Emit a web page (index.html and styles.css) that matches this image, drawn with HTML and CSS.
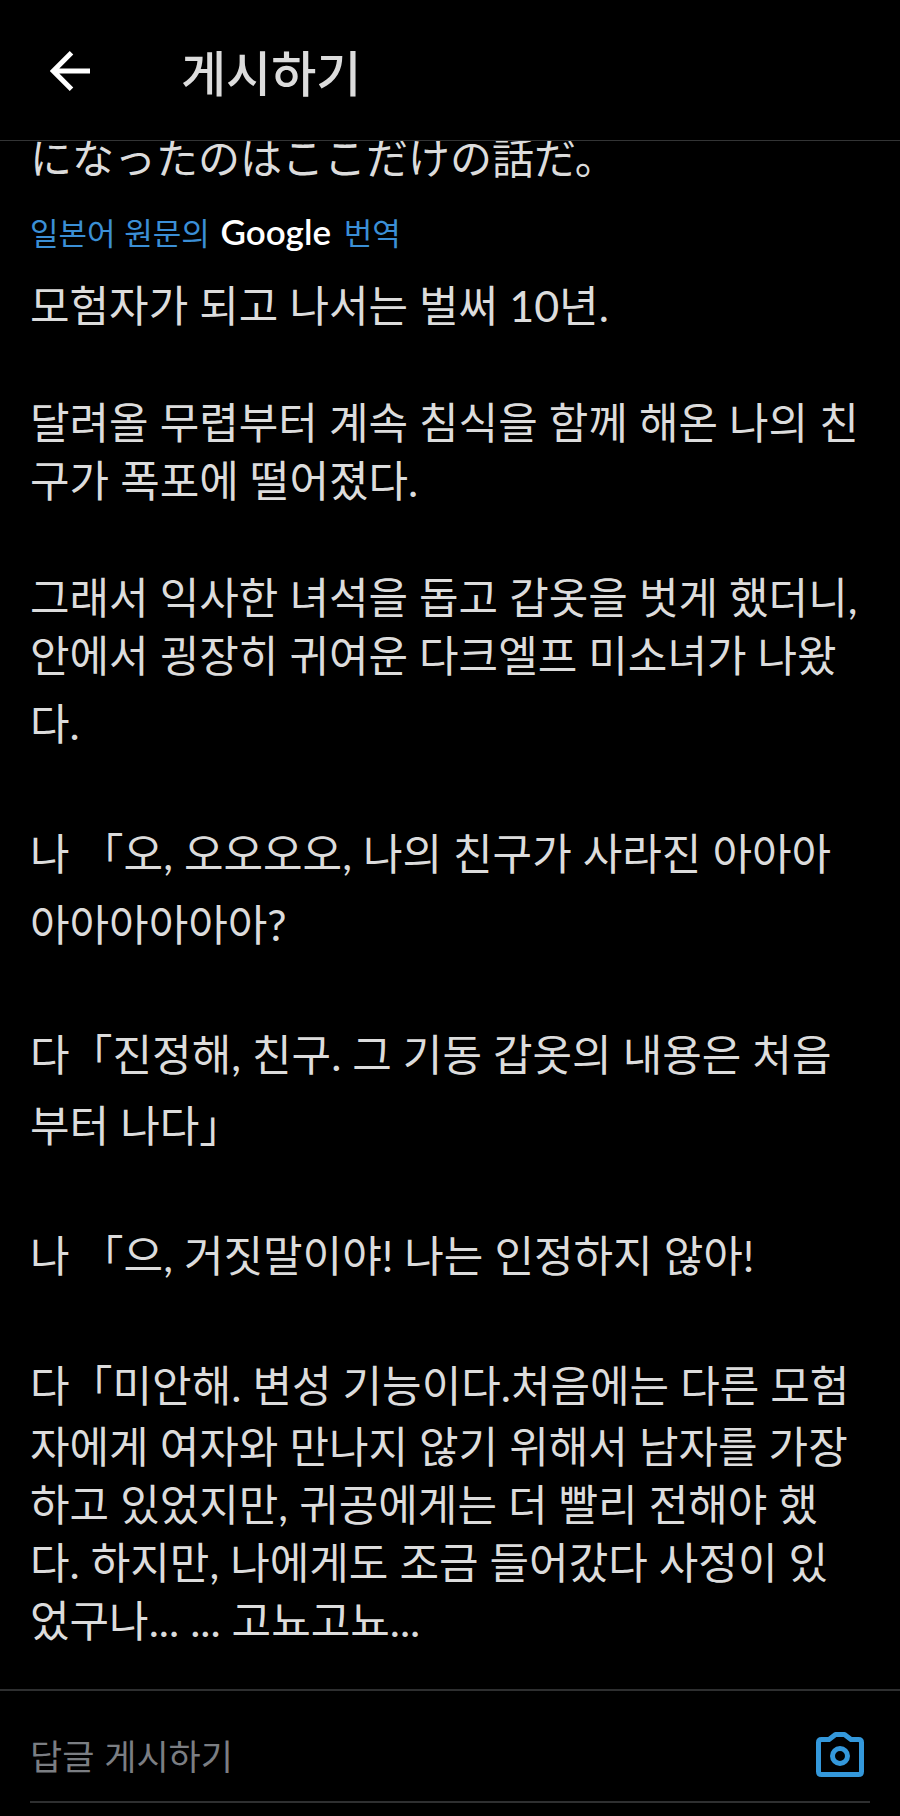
FILE: index.html
```html
<!DOCTYPE html>
<html lang="ko">
<head>
  <meta charset="UTF-8">
  <title>게시하기</title>
  <meta name="viewport" content="width=device-width, initial-scale=1.0">
  <link rel="stylesheet" href="styles.css">
</head>
<body>
  <header class="topbar">
    <button class="back" type="button" aria-label="뒤로">
      <svg viewBox="0 0 40 40" width="40" height="40" fill="none" stroke="currentColor" stroke-width="5">
        <path d="M40 20H4M21.500 1.800L3.300 20l18.200 18.200"/>
      </svg>
    </button>
    <h1>게시하기</h1>
  </header>

  <main class="post">
    <p class="original" lang="ja">になったのはここだけの話だ。</p>
    <a class="source" href="#">일본어 원문의 <span class="google">Google</span> 번역</a>

    <div class="translation">
      <p>모험자가 되고 나서는 벌써 10년.</p>
      <p>달려올 무렵부터 계속 침식을 함께 해온 나의 친<br>구가 폭포에 떨어졌다.</p>
      <p>그래서 익사한 녀석을 돕고 갑옷을 벗게 했더니,<br>안에서 굉장히 귀여운 다크엘프 미소녀가 나왔<span class="tall">다.</span></p>
      <p><span class="tall">나 「오, 오오오오, 나의 친구가 사라진 아아아</span><span class="tall">아아아아아아?</span></p>
      <p><span class="tall">다「진정해, 친구. 그 기동 갑옷의 내용은 처음</span><span class="tall">부터 나다」</span></p>
      <p><span class="tall">나 「으, 거짓말이야! 나는 인정하지 않아!</span></p>
      <p><span class="tall">다「미안해. 변성 기능이다.처음에는 다른 모험</span>자에게 여자와 만나지 않기 위해서 남자를 가장<br>하고 있었지만, 귀공에게는 더 빨리 전해야 했<br>다. 하지만, 나에게도 조금 들어갔다 사정이 있<br>었구나... ... 고뇨고뇨...</p>
    </div>
  </main>

  <footer class="reply">
    <form class="reply-box" action="#">
      <input type="text" placeholder="답글 게시하기" aria-label="답글 게시하기">
      <button class="camera" type="button" aria-label="사진">
        <svg viewBox="0 0 48 45" width="48" height="45" fill="none" stroke="currentColor" stroke-width="5" stroke-linejoin="round">
          <path d="M5.500 7.500H13L19.500 2.500h9L35 7.500h7.500q3 0 3 3v29q0 3-3 3h-37q-3 0-3-3v-29q0-3 3-3z"/>
          <circle cx="24" cy="24" r="7.500"/>
        </svg>
      </button>
    </form>
  </footer>
</body>
</html>
```
FILE: styles.css
```css
* {
  box-sizing: border-box;
}

body {
  margin: 0;
  min-height: 100vh;
  display: flex;
  flex-direction: column;
  background: #000;
  color: #dcdcdc;
  font-family: "Noto Sans CJK KR", sans-serif;
}

button {
  padding: 0;
  border: none;
  background: none;
  cursor: pointer;
}

svg {
  display: block;
}

p {
  margin: 0;
}

.topbar {
  display: flex;
  align-items: center;
  gap: 91px;
  height: 141px;
  padding: 2px 50px 0;
  border-bottom: 1px solid #333435;
}

.back {
  color: #fff;
}

.topbar h1 {
  margin: 0;
  font-size: 49px;
  font-weight: 500;
  line-height: 70px;
}

.post {
  flex: 1;
  padding: 0 30px;
  overflow: hidden;
}

.original {
  margin-top: -14px;
  font-family: "Noto Sans CJK JP", sans-serif;
  font-size: 42px;
  line-height: 58px;
}

.source {
  display: block;
  margin-top: 21px;
  color: #3b8fd6;
  font-size: 31px;
  line-height: 50px;
  text-decoration: none;
}

.google {
  margin: 0 4px 0 2px;
  color: #fff;
  font-family: Lato, sans-serif;
  font-size: 35px;
  font-weight: 600;
}

.translation {
  margin-top: 20px;
  font-family: Lato, "Noto Sans CJK KR", sans-serif;
  font-size: 43px;
  line-height: 58px;
  white-space: nowrap;
}

.translation p + p {
  margin-top: 59px;
}

/* lines that sit a little further apart */
.tall {
  display: block;
  padding-top: 7px;
  line-height: 64px;
}

.reply {
  padding: 0 30px 13px;
  border-top: 2px solid #2e2f30;
}

.reply-box {
  display: flex;
  align-items: center;
  height: 112px;
  padding: 16px 6px 0 0;
  border-bottom: 2px solid #2e2f30;
}

.reply-box input {
  flex: 1;
  min-width: 0;
  padding: 0;
  border: none;
  outline: none;
  background: none;
  color: #dcdcdc;
  font: 35px "Noto Sans CJK KR", sans-serif;
}

.reply-box input::placeholder {
  color: #7b7e83;
}

.camera {
  color: #3498db;
}
```
